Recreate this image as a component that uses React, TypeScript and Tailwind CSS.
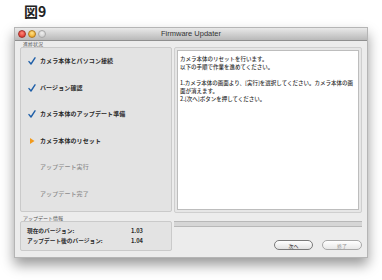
import React from "react";

const jp = { fontFamily: '"Noto Sans CJK JP", "Noto Sans", sans-serif' };

function Check() {
  return (
    <svg width="8" height="8" viewBox="0 0 8 8">
      <path d="M1 4.6 L3 7 L7 0.8" fill="none" stroke="#1f5fa8" strokeWidth="1.4" strokeLinecap="round" strokeLinejoin="round" />
    </svg>
  );
}

function Arrow() {
  return (
    <svg width="8" height="8" viewBox="0 0 8 8">
      <path d="M2 1 L6.5 4 L2 7 Z" fill="#f29a1c" />
    </svg>
  );
}

const steps: { label: string; state: "done" | "current" | "todo" }[] = [
  { label: "カメラ本体とパソコン接続", state: "done" },
  { label: "バージョン確認", state: "done" },
  { label: "カメラ本体のアップデート準備", state: "done" },
  { label: "カメラ本体のリセット", state: "current" },
  { label: "アップデート実行", state: "todo" },
  { label: "アップデート完了", state: "todo" },
];

export default function App() {
  return (
    <div className="w-[382px] h-[280px] bg-white overflow-hidden" style={jp}>
      <div className="pl-[24px] pt-[2px] h-[27px] text-[14px] font-bold text-[#222] leading-[18px]">図9</div>
      <div className="ml-[14px] w-[354px] h-[231px] bg-[#ececec] border border-[#b5b5b5] shadow-[0_7px_12px_rgba(0,0,0,0.4)] flex flex-col">
        {/* title bar */}
        <div className="relative h-[13px] bg-gradient-to-b from-[#e9e9e9] to-[#b9b9b9] border-b border-[#8f8f8f] flex items-center justify-center">
          <div className="absolute left-[3px] top-[2px] flex gap-[2px]">
            <div className="w-[8px] h-[8px] rounded-full bg-[radial-gradient(circle_at_50%_35%,#ff8a7a,#d8231c)] border border-[#a0302a]" />
            <div className="w-[8px] h-[8px] rounded-full bg-[radial-gradient(circle_at_50%_35%,#ffe28a,#e89a10)] border border-[#b07a20]" />
            <div className="w-[8px] h-[8px] rounded-full bg-[radial-gradient(circle_at_50%_35%,#f0f0f0,#c4c4c4)] border border-[#a8a8a8]" />
          </div>
          <span className="text-[7.5px] text-[#333] leading-none" style={{ fontFamily: '"Liberation Sans", sans-serif' }}>Firmware Updater</span>
        </div>
        {/* body */}
        <div className="flex gap-[2px] px-[5px]">
          {/* left column */}
          <div className="w-[152px] flex flex-col">
            <div className="h-[6px] text-[5px] leading-[6px] text-[#555] pl-[3px]">進捗状況</div>
            <div className="h-[165px] bg-[#e3e3e3] border border-[#cacaca] rounded-[2px] flex flex-col">
              {steps.map((s) => (
                <div key={s.label} className="h-[26.5px] flex items-center">
                  <div className="w-[19px] pl-[7px] flex items-center">
                    {s.state === "done" && <Check />}
                    {s.state === "current" && <Arrow />}
                  </div>
                  <span
                    className={
                      "text-[6px] tracking-[0.1px] leading-none " +
                      (s.state === "todo" ? "text-[#8c8c8c] font-medium" : "text-[#2a2a2a] font-bold")
                    }
                  >
                    {s.label}
                  </span>
                </div>
              ))}
            </div>
            <div className="h-[9px] text-[5px] leading-[5px] text-[#555] pl-[3px] pt-[3px]">アップデート情報</div>
            <div className="h-[30px] bg-[#e3e3e3] border border-[#cacaca] rounded-[2px] flex flex-col justify-center gap-[4px] px-[6px] text-[5.7px] leading-none font-bold text-[#2a2a2a]">
              <div className="flex">
                <span className="w-[104px]">現在のバージョン:</span>
                <span>1.03</span>
              </div>
              <div className="flex">
                <span className="w-[104px]">アップデート後のバージョン:</span>
                <span>1.04</span>
              </div>
            </div>
          </div>
          {/* right column */}
          <div className="w-[188px] flex flex-col pt-[6px]">
            <div className="h-[166px] bg-[#e6e6e6] border border-[#cfcfcf] p-[2px] rounded-[2px]">
              <div className="h-full bg-white border border-[#bdbdbd] px-[2px] pt-[4px] text-[5.5px] leading-[8px] text-[#2f2f2f] font-medium">
                <div>カメラ本体のリセットを行います。</div>
                <div>以下の手順で作業を進めてください。</div>
                <div className="h-[8px]" />
                <div className="whitespace-nowrap">1.カメラ本体の画面より、[実行]を選択してください。カメラ本体の画</div>
                <div>面が消えます。</div>
                <div>2.[次へ]ボタンを押してください。</div>
              </div>
            </div>
            <div className="mt-[8px] h-[6px] bg-[#d6d6d6] border-t border-b border-[#b8b8b8]" />
            <div className="mt-[13px] flex justify-end gap-[9px]">
              <div className="w-[39px] h-[10px] rounded-full border border-[#7a7a7a] bg-gradient-to-b from-white to-[#e2e2e2] flex items-center justify-center text-[5px] leading-none text-[#222]">次へ</div>
              <div className="w-[40px] h-[10px] rounded-full border border-[#a8a8a8] bg-gradient-to-b from-white to-[#e8e8e8] flex items-center justify-center text-[5px] leading-none text-[#9a9a9a]">終了</div>
            </div>
          </div>
        </div>
      </div>
    </div>
  );
}
